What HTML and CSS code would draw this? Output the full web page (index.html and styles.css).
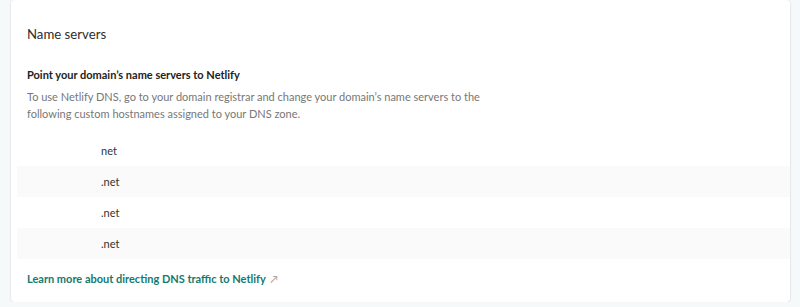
FILE: index.html
```html
<!DOCTYPE html>
<html lang="en">
<head>
    <meta charset="UTF-8">
    <meta name="viewport" content="width=device-width, initial-scale=1.0">
    <title>Name servers</title>
    <link rel="stylesheet" href="styles.css">
</head>
<body>
    <div class="card card-prev"></div>

    <section class="card">
        <h2 class="card-title">Name servers</h2>

        <h3 class="sub-title">Point your domain’s name servers to Netlify</h3>
        <p class="description">To use Netlify DNS, go to your domain registrar and change your domain’s name servers to the following custom hostnames assigned to your DNS zone.</p>

        <ul class="ns-list">
            <li><span class="host"></span>net</li>
            <li><span class="host"></span>.net</li>
            <li><span class="host"></span>.net</li>
            <li><span class="host"></span>.net</li>
        </ul>

        <a href="#" class="learn-more">Learn more about directing DNS traffic to Netlify <span class="arrow">↗</span></a>
    </section>
</body>
</html>
```

FILE: styles.css
```css
html, body {
    overflow: hidden;
}

body {
    font-family: Lato, "Noto Sans", sans-serif;
    margin: 0;
    padding: 0 0 0 11px;
    background-color: #f5f9fa;
    color: #333;
}

.card {
    box-sizing: border-box;
    width: 779px;
    background-color: #fff;
    border-radius: 4px;
    box-shadow: 0 0 0 1px rgba(0, 0, 0, 0.03), 0 1px 3px rgba(0, 0, 0, 0.08);
    padding: 16px 16px 14px 16px;
    overflow: hidden;
}

.card-prev {
    width: 777px;
    height: 3px;
    padding: 0;
    margin: -10px 1px 7px 1px;
}

.card-title {
    font-size: 13.2px;
    font-weight: 400;
    margin: 9px 0 23px 0;
    color: #2d2d2d;
    line-height: 18px;
}

.sub-title {
    font-size: 11px;
    font-weight: 700;
    margin: 0 0 5px 0;
    color: #222;
    line-height: 17px;
}

.description {
    font-size: 11px;
    color: #777;
    line-height: 17px;
    margin: 0 0 13px 0;
    max-width: 462px;
}

.ns-list {
    list-style: none;
    margin: 0 -16px 11px -10px;
    padding: 0;
}

.ns-list li {
    height: 31px;
    line-height: 31px;
    font-size: 11px;
    color: #333;
    display: flex;
}

.ns-list li:nth-child(even) {
    background-color: #fafafa;
}

.host {
    width: 84px;
}

.learn-more {
    display: block;
    font-size: 11px;
    font-weight: 700;
    color: #127a6e;
    text-decoration: none;
    line-height: 18px;
}

.arrow {
    color: #999;
    font-weight: 400;
    font-size: 10px;
    margin-left: 2px;
}
```
